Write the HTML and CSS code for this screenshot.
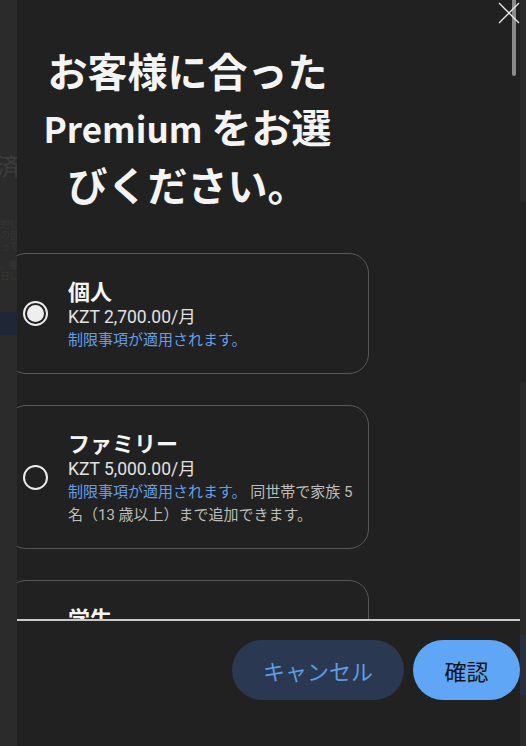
FILE: index.html
```html
<!DOCTYPE html>
<html lang="ja">
<head>
    <meta charset="UTF-8">
    <meta name="viewport" content="width=device-width, initial-scale=1.0">
    <title>Premium を選ぶ</title>
    <link rel="stylesheet" href="styles.css">
</head>
<body>
    <div class="page-left">
        <div class="bg-heading">済み</div>
        <div class="bg-text">的に<br>の部<br>って</div>
        <div class="bg-text small">、新<br>日に</div>
        <div class="bg-bar"></div>
    </div>

    <div class="dialog">
        <div class="scroller">
            <div class="column">
                <h1 class="title">お客様に合った <span class="latin">Premium</span> をお選びください。</h1>

                <div class="plan">
                    <span class="radio checked"></span>
                    <div class="plan-info">
                        <div class="plan-name">個人</div>
                        <div class="plan-price">KZT 2,700.00/月</div>
                        <div class="plan-note"><span class="link">制限事項が適用されます。</span></div>
                    </div>
                </div>

                <div class="plan">
                    <span class="radio"></span>
                    <div class="plan-info">
                        <div class="plan-name">ファミリー</div>
                        <div class="plan-price">KZT 5,000.00/月</div>
                        <div class="plan-note"><span class="link">制限事項が適用されます。</span> 同世帯で家族 5 名（13 歳以上）まで追加できます。</div>
                    </div>
                </div>

                <div class="plan">
                    <span class="radio"></span>
                    <div class="plan-info">
                        <div class="plan-name">学生</div>
                        <div class="plan-price">KZT 1,450.00/月</div>
                        <div class="plan-note"><span class="link">制限事項が適用されます。</span></div>
                    </div>
                </div>
            </div>
        </div>

        <div class="footer">
            <button class="btn btn-cancel">キャンセル</button>
            <button class="btn btn-ok">確認</button>
        </div>

        <!-- scrollbar thumb and close button sit on top of the dialog -->
        <div class="thumb"></div>
        <svg class="close" width="22" height="22" viewBox="0 0 22 22">
            <path d="M1 1 L21 21 M21 1 L1 21" stroke="#e6e6e6" stroke-width="1.4" fill="none"/>
        </svg>
    </div>

    <div class="page-right">
        <div class="bg-panel"></div>
        <div class="bg-btn"></div>
    </div>
</body>
</html>
```

FILE: styles.css
```css
body {
    margin: 0;
    height: 746px;
    display: flex;
    background: #2a2a2a;
    font-family: Roboto, "Noto Sans CJK JP", sans-serif;
    overflow: hidden;
}

/* page behind the dialog */
.page-left {
    width: 17px;
    flex-shrink: 0;
    overflow: hidden;
    background: #2b2b2b;
    padding-top: 152px;
    box-sizing: border-box;
    color: #3c3c3c;
}
.bg-heading {
    font-size: 24px;
    line-height: 30px;
    white-space: nowrap;
    margin-left: -4px;
}
.bg-text {
    font-size: 10px;
    line-height: 11px;
    margin-top: 37px;
    white-space: nowrap;
    color: #363636;
}
.bg-text.small {
    margin-top: 8px;
}
.bg-bar {
    height: 23px;
    margin-top: 30px;
    background: #1f2635;
}
.page-right {
    width: 6px;
    flex-shrink: 0;
    background: #2a2a2a;
}
.bg-panel {
    height: 180px;
    margin-top: 202px;
    background: #232323;
}
.bg-btn {
    height: 60px;
    margin-top: 253px;
    background: #27303f;
}

/* dialog */
.dialog {
    position: relative;
    width: 503px;
    flex-shrink: 0;
    background: #212121;
    display: flex;
    flex-direction: column;
    overflow: hidden;
}
.scroller {
    height: 619px;
    flex-shrink: 0;
    overflow: hidden;
    border-bottom: 2px solid #c9c9c9;
}
.column {
    width: 363px;
    margin-left: -11px;
    padding-top: 42px;
}
.title {
    width: 300px;
    margin: 0 auto 41px;
    font-family: "Noto Sans CJK JP", sans-serif;
    font-size: 40px;
    line-height: 56px;
    font-weight: 700;
    color: #f4f4f4;
    text-align: center;
}
.latin {
    font-size: 35px;
}

.plan {
    display: flex;
    align-items: center;
    border: 1px solid #585858;
    border-radius: 20px;
    padding: 21px 10px 21px 0;
    margin-bottom: 31px;
}
.radio {
    width: 25px;
    height: 25px;
    flex-shrink: 0;
    box-sizing: border-box;
    border: 2px solid #ececec;
    border-radius: 50%;
    margin: 0 20px 0 16px;
    padding: 2px;
}
.radio.checked::after {
    content: "";
    display: block;
    width: 17px;
    height: 17px;
    border-radius: 50%;
    background: #eeeeee;
}
.plan-info {
    flex: 1;
}
.plan-name {
    font-family: "Noto Sans CJK JP", sans-serif;
    font-size: 22px;
    font-weight: 700;
    line-height: 30px;
    color: #f5f5f5;
}
.plan-price {
    font-size: 17.5px;
    line-height: 24px;
    color: #e2e2e2;
}
.plan-note {
    font-size: 15px;
    line-height: 23px;
    color: #bdbdbd;
}
.link {
    color: #669de4;
}

/* footer */
.footer {
    display: flex;
    justify-content: flex-end;
    gap: 9px;
    padding-top: 19px;
}
.btn {
    height: 60px;
    border: none;
    border-radius: 30px;
    font-family: Roboto, "Noto Sans CJK JP", sans-serif;
    font-size: 22px;
}
.btn-cancel {
    width: 172px;
    background: #2a3851;
    color: #5d9ce2;
}
.btn-ok {
    width: 107px;
    background: #60a6f6;
    color: #141414;
}

.thumb {
    position: absolute;
    top: 0;
    right: 4px;
    width: 4px;
    height: 76px;
    border-radius: 0 0 2px 2px;
    background: #8a8a8a;
}
.close {
    position: absolute;
    top: 2px;
    right: 0;
}
```
